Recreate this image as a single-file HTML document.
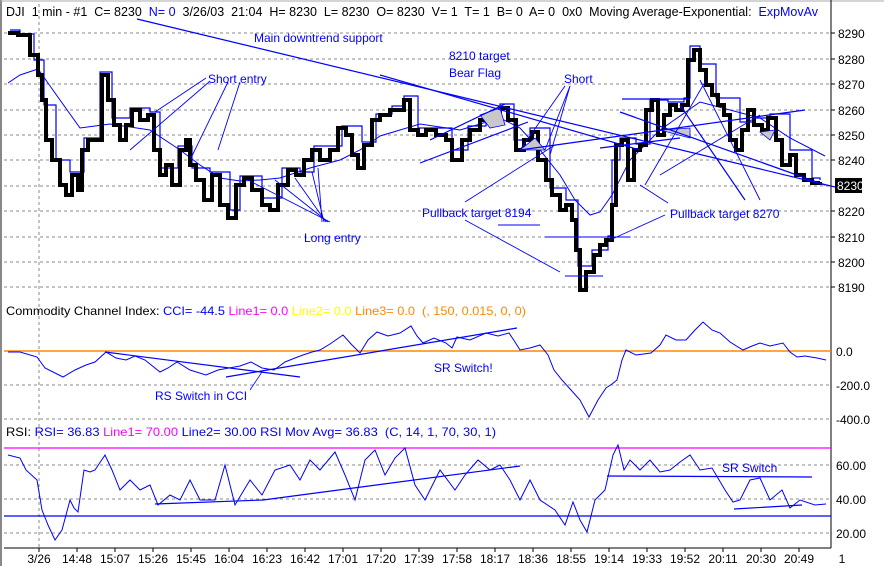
<!DOCTYPE html>
<html><head><meta charset="utf-8"><style>
html,body{margin:0;padding:0;background:#fff;}
svg{display:block;font-family:"Liberation Sans",sans-serif;}
</style></head><body>
<svg width="884" height="566" viewBox="0 0 884 566" xmlns="http://www.w3.org/2000/svg">
<rect width="884" height="566" fill="#fff"/>
<line x1="1" y1="0" x2="1" y2="566" stroke="#888" stroke-width="2"/>
<line x1="0" y1="1" x2="884" y2="1" stroke="#aaa" stroke-width="1"/>
<g stroke="#888" stroke-dasharray="3,3" stroke-width="1">
<line x1="4" y1="33" x2="831" y2="33"/><line x1="4" y1="59" x2="831" y2="59"/><line x1="4" y1="84" x2="831" y2="84"/><line x1="4" y1="110" x2="831" y2="110"/><line x1="4" y1="135" x2="831" y2="135"/><line x1="4" y1="160" x2="831" y2="160"/><line x1="4" y1="186" x2="831" y2="186"/><line x1="4" y1="211" x2="831" y2="211"/><line x1="4" y1="237" x2="831" y2="237"/><line x1="4" y1="262" x2="831" y2="262"/><line x1="4" y1="287" x2="831" y2="287"/>
<line x1="4" y1="385" x2="831" y2="385"/><line x1="4" y1="419" x2="831" y2="419"/>
<line x1="4" y1="465" x2="831" y2="465"/><line x1="4" y1="499" x2="831" y2="499"/><line x1="4" y1="533" x2="831" y2="533"/>
<line x1="39" y1="4" x2="39" y2="548"/>
</g>
<line x1="831" y1="0" x2="831" y2="548" stroke="#000"/>
<line x1="4" y1="548" x2="831" y2="548" stroke="#000"/>
<g stroke="#000">
<line x1="39" y1="548" x2="39" y2="552"/><line x1="77" y1="548" x2="77" y2="552"/><line x1="115" y1="548" x2="115" y2="552"/><line x1="153" y1="548" x2="153" y2="552"/><line x1="191" y1="548" x2="191" y2="552"/><line x1="229" y1="548" x2="229" y2="552"/><line x1="267" y1="548" x2="267" y2="552"/><line x1="305" y1="548" x2="305" y2="552"/><line x1="343" y1="548" x2="343" y2="552"/><line x1="381" y1="548" x2="381" y2="552"/><line x1="419" y1="548" x2="419" y2="552"/><line x1="457" y1="548" x2="457" y2="552"/><line x1="495" y1="548" x2="495" y2="552"/><line x1="533" y1="548" x2="533" y2="552"/><line x1="571" y1="548" x2="571" y2="552"/><line x1="609" y1="548" x2="609" y2="552"/><line x1="647" y1="548" x2="647" y2="552"/><line x1="685" y1="548" x2="685" y2="552"/><line x1="723" y1="548" x2="723" y2="552"/><line x1="761" y1="548" x2="761" y2="552"/><line x1="799" y1="548" x2="799" y2="552"/>
<line x1="831" y1="33" x2="835" y2="33"/><line x1="831" y1="59" x2="835" y2="59"/><line x1="831" y1="84" x2="835" y2="84"/><line x1="831" y1="110" x2="835" y2="110"/><line x1="831" y1="135" x2="835" y2="135"/><line x1="831" y1="160" x2="835" y2="160"/><line x1="831" y1="211" x2="835" y2="211"/><line x1="831" y1="237" x2="835" y2="237"/><line x1="831" y1="262" x2="835" y2="262"/><line x1="831" y1="287" x2="835" y2="287"/>
</g>
<text x="6" y="16" font-size="12.5" fill="#000">DJI&#160; 1 min - #1&#160; C= 8230&#160; <tspan fill="#00f">N= 0</tspan>&#160; 3/26/03&#160; 21:04&#160; H= 8230&#160; L= 8230&#160; O= 8230&#160; V= 1&#160; T= 1&#160; B= 0&#160; A= 0&#160; 0x0&#160; Moving Average-Exponential:&#160; <tspan fill="#00f">ExpMovAv</tspan></text>
<rect x="831" y="2" width="53" height="20" fill="#fff"/>
<line x1="831" y1="0" x2="831" y2="22" stroke="#000"/>
<polyline fill="none" stroke="#00f" stroke-width="1" points="8,83 20,75 38,69 60,100 80,128 110,124 150,130 180,150 200,165 220,178 240,181 260,180 280,178 310,168 340,160 360,150 380,136 420,124 460,130 500,118 520,128 540,150 560,175 575,200 590,215 600,212 612,195 630,160 660,130 700,102 730,110 760,118 790,138 825,156"/>
<path fill="none" stroke="#00f" stroke-width="1.2" d="M10,30 H20 V34 H34 V60 H44 V105 H56 V160 H70 V172 H84 V138 H100 V72 H112 V118 H130 V108 H150 V112 H160 V168 H178 V146 H192 V168 H210 V172 H230 V210 H240 V176 H262 V198 H282 V168 H300 V172 H314 V146 H332 V146 H342 V126 H362 V142 H376 V114 H392 V106 H404 V96 H418 V128 H436 V128 H452 V150 H468 V126 H486 V114 H500 V104 H514 V140 H530 V128 H550 V188 H566 V200 H578 V266 H592 V250 H608 V236 H612 V160 H620 V138 H636 V144 H650 V100 H668 V102 H684 V98 H690 V46 H700 V64 H716 V98 H740 V122 H754 V118 H770 V114 H790 V150 H812 V178 H820 V180"/>
<path fill="none" stroke="#000" stroke-width="4" d="M8,33 H18 V35 H30 V55 H38 V75 H42 V100 H46 V140 H52 V160 H60 V185 H66 V195 H72 V175 H78 V190 H82 V150 H88 V140 H96 V140 H102 V75 H108 V100 H114 V125 H120 V140 H126 V125 H132 V110 H140 V120 H148 V115 H154 V150 H160 V175 H166 V165 H172 V185 H180 V150 H186 V140 H190 V165 H196 V180 H204 V200 H212 V175 H220 V205 H228 V218 H236 V185 H244 V178 H252 V190 H262 V205 H270 V210 H278 V185 H288 V170 H296 V175 H304 V160 H312 V150 H320 V160 H330 V150 H338 V128 H346 V135 H352 V155 H358 V168 H364 V145 H372 V120 H380 V115 H390 V110 H398 V110 H404 V100 H410 V130 H418 V135 H426 V130 H436 V135 H446 V140 H452 V160 H462 V140 H470 V130 H480 V120 H490 V115 H500 V108 H508 V120 H516 V150 H524 V140 H532 V132 H538 V160 H546 V180 H552 V195 H560 V210 H566 V205 H572 V220 H576 V250 H580 V290 H586 V272 H594 V255 H600 V245 H606 V240 H612 V205 H616 V145 H622 V140 H628 V180 H634 V150 H640 V145 H646 V110 H652 V100 H658 V135 H664 V115 H670 V105 H676 V110 H682 V105 H688 V60 H694 V50 H700 V70 H706 V85 H712 V95 H718 V105 H724 V115 H730 V140 H736 V150 H742 V130 H748 V110 H754 V125 H762 V130 H768 V118 H776 V140 H782 V165 H790 V155 H796 V175 H804 V180 H812 V183 H820 V182"/>
<g fill="#c8c8c8" stroke="#00f" stroke-width="0.8"><polygon points="480,115 500,108 505,125 490,128"/><polygon points="520,150 545,150 535,138"/><polygon points="660,130 690,128 690,138"/><polygon points="760,132 775,130 770,140"/></g>
<g fill="none" stroke="#00f" stroke-width="1.2">
<line x1="137" y1="19" x2="835" y2="187"/>
<line x1="420" y1="163" x2="528" y2="122"/>
<line x1="430" y1="140" x2="505" y2="104"/>
<line x1="380" y1="75" x2="640" y2="150"/>
<line x1="520" y1="150" x2="805" y2="110"/>
<line x1="600" y1="148" x2="680" y2="138"/>
<line x1="622" y1="99" x2="690" y2="99"/>
<line x1="620" y1="112" x2="825" y2="185"/>
<line x1="680" y1="105" x2="745" y2="200"/>
</g>
<g fill="none" stroke="#00f" stroke-width="0.9">
<line x1="209" y1="82" x2="130" y2="150"/><line x1="228" y1="82" x2="190" y2="160"/><line x1="240" y1="82" x2="218" y2="150"/><line x1="206" y1="78" x2="155" y2="112"/>
<line x1="330" y1="222" x2="248" y2="180"/><line x1="328" y1="222" x2="275" y2="180"/><line x1="326" y1="222" x2="295" y2="178"/><line x1="324" y1="222" x2="312" y2="172"/><line x1="322" y1="222" x2="318" y2="168"/>
<line x1="565" y1="86" x2="520" y2="150"/><line x1="570" y1="86" x2="545" y2="150"/><line x1="570" y1="86" x2="550" y2="155"/>
<line x1="465" y1="220" x2="560" y2="272"/><line x1="465" y1="202" x2="555" y2="145"/>
<line x1="498" y1="225" x2="540" y2="225"/><line x1="545" y1="237" x2="630" y2="237"/><line x1="565" y1="276" x2="603" y2="276"/>
<line x1="665" y1="215" x2="610" y2="240"/><line x1="668" y1="203" x2="640" y2="185"/>
<line x1="645" y1="185" x2="705" y2="82"/><line x1="660" y1="175" x2="760" y2="115"/><line x1="700" y1="80" x2="760" y2="200"/>
</g>
<g fill="#00f" font-size="12">
<text x="254" y="42">Main downtrend support</text>
<text x="449" y="60">8210 target</text>
<text x="449" y="77">Bear Flag</text>
<text x="208" y="83">Short entry</text>
<text x="564" y="83">Short</text>
<text x="304" y="242">Long entry</text>
<text x="422" y="217">Pullback target 8194</text>
<text x="670" y="218">Pullback target 8270</text>
</g>
<g font-size="12" fill="#000">
<text x="838" y="38">8290</text><text x="838" y="64">8280</text><text x="838" y="89">8270</text><text x="838" y="115">8260</text><text x="838" y="140">8250</text><text x="838" y="165">8240</text><text x="838" y="216">8220</text><text x="838" y="242">8210</text><text x="838" y="267">8200</text><text x="838" y="292">8190</text>
</g>
<rect x="835" y="178" width="27" height="15" fill="#000"/>
<text x="837" y="190" font-size="12" fill="#fff">8230</text>
<text x="6" y="315" font-size="12" fill="#000" textLength="520" lengthAdjust="spacingAndGlyphs">Commodity Channel Index: <tspan fill="#00f">CCI= -44.5</tspan> <tspan fill="#f0f">Line1= 0.0</tspan> <tspan fill="#ff0">Line2= 0.0</tspan> <tspan fill="#f80">Line3= 0.0&#160; (, 150, 0.015, 0, 0)</tspan></text>
<line x1="4" y1="351" x2="831" y2="351" stroke="#f80" stroke-width="1.5"/>
<polyline fill="none" stroke="#00f" stroke-width="1" points="8,352 20,352 37,357 45,368 63,377 75,370 86,365 95,362 106,352 116,358 126,360 135,356 145,360 160,372 168,368 177,362 190,370 206,375 218,370 229,368 240,366 251,362 262,368 274,370 285,362 295,358 303,355 312,352 320,350 330,344 343,335 352,345 360,353 368,340 377,332 388,336 400,333 411,326 417,336 423,343 434,338 446,343 452,348 457,337 470,340 486,333 498,336 509,333 515,342 520,350 530,348 540,345 548,355 554,370 562,380 571,390 580,400 589,417 598,400 606,388 612,384 617,380 622,360 626,350 636,355 651,353 660,345 666,335 676,340 686,340 695,330 703,322 712,330 720,333 730,342 743,350 752,346 760,343 770,346 783,343 790,352 797,357 805,356 817,358 826,360"/>
<g fill="none" stroke="#00f" stroke-width="1.2"><line x1="105" y1="352" x2="300" y2="377"/><line x1="226" y1="377" x2="517" y2="328"/></g>
<line x1="250" y1="390" x2="262" y2="372" stroke="#00f" stroke-width="0.8"/>
<g fill="#00f" font-size="12"><text x="155" y="400">RS Switch in CCI</text><text x="434" y="372">SR Switch!</text></g>
<g font-size="12" fill="#000"><text x="836" y="356">0.0</text><text x="836" y="390">-200.0</text><text x="836" y="424">-400.0</text></g>
<text x="6" y="436" font-size="12" fill="#000" textLength="490" lengthAdjust="spacingAndGlyphs">RSI: <tspan fill="#00f">RSI= 36.83</tspan> <tspan fill="#f0f">Line1= 70.00</tspan> <tspan fill="#00f">Line2= 30.00 RSI Mov Avg= 36.83&#160; (C, 14, 1, 70, 30, 1)</tspan></text>
<line x1="4" y1="448" x2="831" y2="448" stroke="#f0f" stroke-width="1.2"/>
<line x1="4" y1="516" x2="831" y2="516" stroke="#00f" stroke-width="1.2"/>
<polyline fill="none" stroke="#00f" stroke-width="1" points="8,455 20,458 26,470 37,480 42,510 48,525 55,540 62,530 70,500 74,508 78,512 84,470 90,472 95,470 105,455 112,470 120,490 130,480 140,490 150,485 158,505 170,495 180,500 190,480 200,500 215,500 225,465 235,505 250,480 262,495 275,470 290,465 300,480 310,460 320,470 335,452 345,475 355,500 365,460 375,450 385,475 395,458 405,448 415,485 425,500 440,470 455,490 465,475 478,460 490,470 500,465 510,480 520,500 530,480 540,500 555,510 565,525 573,502 580,520 587,532 595,500 605,490 613,455 618,445 624,470 630,460 640,470 650,460 660,472 670,470 680,462 690,455 700,470 712,468 725,490 733,502 740,500 750,480 760,478 770,500 782,490 790,508 800,500 815,505 826,504"/>
<g fill="none" stroke="#00f" stroke-width="1.2"><polyline points="155,504 263,500 520,466"/><line x1="607" y1="476" x2="812" y2="477"/><line x1="734" y1="509" x2="802" y2="505"/></g>
<text x="722" y="472" font-size="12" fill="#00f">SR Switch</text>
<g font-size="12" fill="#000"><text x="836" y="470">60.00</text><text x="836" y="504">40.00</text><text x="836" y="538">20.00</text></g>
<g font-size="12" fill="#000" text-anchor="middle">
<text x="39" y="563">3/26</text><text x="77" y="563">14:48</text><text x="115" y="563">15:07</text><text x="153" y="563">15:26</text><text x="191" y="563">15:45</text><text x="229" y="563">16:04</text><text x="267" y="563">16:23</text><text x="305" y="563">16:42</text><text x="343" y="563">17:01</text><text x="381" y="563">17:20</text><text x="419" y="563">17:39</text><text x="457" y="563">17:58</text><text x="495" y="563">18:17</text><text x="533" y="563">18:36</text><text x="571" y="563">18:55</text><text x="609" y="563">19:14</text><text x="647" y="563">19:33</text><text x="685" y="563">19:52</text><text x="723" y="563">20:11</text><text x="761" y="563">20:30</text><text x="799" y="563">20:49</text><text x="842" y="563">1</text>
</g>
</svg>
</body></html>
